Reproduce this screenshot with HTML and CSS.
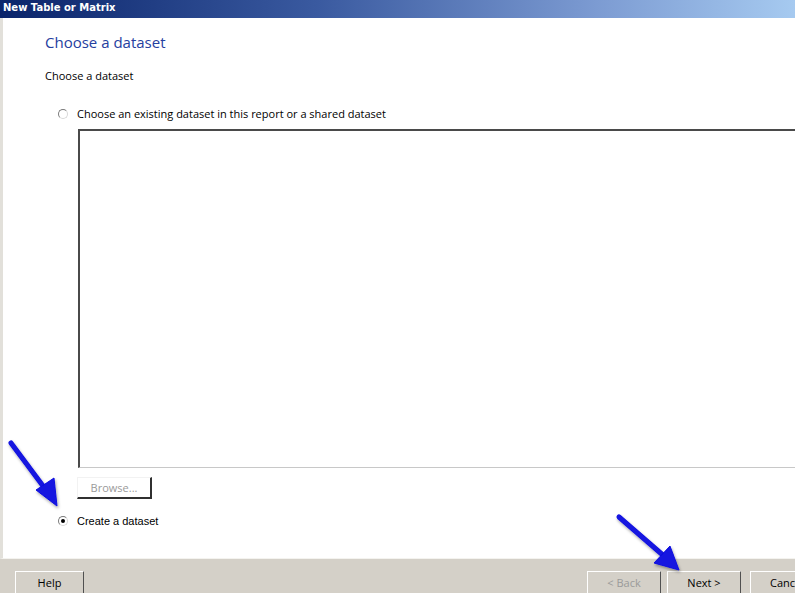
FILE: index.html
```html
<!DOCTYPE html>
<html lang="en">
<head>
    <meta charset="UTF-8">
    <title>New Table or Matrix</title>
    <link rel="stylesheet" href="styles.css">
</head>
<body>
    <div class="wizard">
        <div class="titlebar">New Table or Matrix</div>

        <div class="page">
            <h1 class="page-title">Choose a dataset</h1>
            <p class="section-label">Choose a dataset</p>

            <label class="option">
                <span class="radio"></span>
                <span>Choose an existing dataset in this report or a shared dataset</span>
            </label>

            <div class="dataset-list"></div>

            <button class="btn btn-browse" disabled>Browse...</button>

            <label class="option option-create">
                <span class="radio checked"></span>
                <span>Create a dataset</span>
            </label>
        </div>

        <div class="footer">
            <button class="btn btn-footer">Help</button>
            <div class="nav-buttons">
                <button class="btn btn-footer" disabled>&lt; Back</button>
                <button class="btn btn-footer">Next &gt;</button>
                <button class="btn btn-footer">Cancel</button>
            </div>
        </div>

        <!-- pointers drawn on top of the dialog -->
        <svg class="pointers" width="795" height="593" viewBox="0 0 795 593">
            <defs>
                <filter id="soft" x="-20%" y="-20%" width="140%" height="140%">
                    <feDropShadow dx="1" dy="2" stdDeviation="1.5" flood-color="#000" flood-opacity="0.35"/>
                </filter>
            </defs>
            <g fill="#1212e0" stroke="#1212e0" filter="url(#soft)">
                <line x1="11" y1="443" x2="46" y2="490" stroke-width="5" stroke-linecap="round"/>
                <polygon points="36,490 54,478 57,506" stroke-width="1" stroke-linejoin="round"/>
                <line x1="619" y1="517" x2="664" y2="556" stroke-width="5" stroke-linecap="round"/>
                <polygon points="654,563 670,546 679,570" stroke-width="1" stroke-linejoin="round"/>
            </g>
        </svg>
    </div>
</body>
</html>
```

FILE: styles.css
```css
* {
    box-sizing: border-box;
    margin: 0;
    padding: 0;
}
body {
    width: 795px;
    height: 593px;
    overflow: hidden;
    background-color: #FFFFFF;
    font-family: 'Open Sans', sans-serif;
    color: #000000;
}
.wizard {
    position: relative;
    display: flex;
    flex-direction: column;
    width: 795px;
    height: 593px;
    overflow: hidden;
}
.titlebar {
    height: 18px;
    padding: 2px 0 0 3px;
    background: linear-gradient(to right, #0a246a 0%, #3a5aa0 40%, #7c9bd2 75%, #a6caf0 100%);
    color: #FFFFFF;
    font-family: 'DejaVu Sans', sans-serif;
    font-weight: bold;
    font-size: 10px;
}
.page {
    flex: 1;
    display: flex;
    flex-direction: column;
    align-items: flex-start;
    background-color: #FFFFFF;
    border-left: 3px solid #e2e0da;
    border-bottom: 1px solid #f4f3ef;
    padding: 13px 0 0 42px;
}
.page-title {
    font-weight: normal;
    font-size: 15px;
    color: #2540a0;
    line-height: 22px;
}
.section-label {
    margin-top: 15px;
    font-size: 11px;
    line-height: 16px;
}
.option {
    display: flex;
    align-items: center;
    gap: 9px;
    margin: 22px 0 0 13px;
    font-size: 11px;
    line-height: 16px;
}
.radio {
    width: 10px;
    height: 10px;
    border-radius: 50%;
    border: 1px solid #7a7a7a;
    border-right-color: #d8d8d8;
    border-bottom-color: #d8d8d8;
    background-color: #FFFFFF;
    display: flex;
    align-items: center;
    justify-content: center;
}
.radio.checked::after {
    content: '';
    width: 4px;
    height: 4px;
    border-radius: 50%;
    background-color: #000000;
}
.dataset-list {
    align-self: stretch;
    height: 339px;
    margin: 7px -20px 0 33px;
    border-top: 2px solid #4a4a4a;
    border-left: 2px solid #4a4a4a;
    border-bottom: 1px solid #c8c8c8;
    background-color: #FFFFFF;
}
.btn {
    font-family: 'Open Sans', sans-serif;
    font-size: 11px;
    color: #000000;
    background-color: #d4d0c8;
    border: 1px solid;
    border-color: #FFFFFF #404040 #404040 #FFFFFF;
    cursor: pointer;
}
.btn:disabled {
    color: #9a9a9a;
}
.btn-browse {
    width: 75px;
    height: 22px;
    margin: 9px 0 0 32px;
    background-color: #FFFFFF;
    border-color: #f2f2f2 #303030 #303030 #f2f2f2;
    border-width: 1px 2px 2px 1px;
}
.option-create {
    margin-top: 14px;
    font-family: 'Liberation Sans', sans-serif;
}
.footer {
    height: 34px;
    display: flex;
    justify-content: space-between;
    padding: 12px 0 0 15px;
    background-color: #d4d0c8;
}
.btn-footer {
    width: 69px;
    height: 24px;
    line-height: 20px;
    border-color: #FFFFFF #505050 #505050 #FFFFFF;
}
.nav-buttons {
    display: flex;
    gap: 6px;
    margin-right: -29px;
}
.nav-buttons .btn-footer {
    width: 74px;
}
.nav-buttons .btn-footer:last-child {
    margin-left: 3px;
}
.pointers {
    position: absolute;
    left: 0;
    top: 0;
    pointer-events: none;
}
```
